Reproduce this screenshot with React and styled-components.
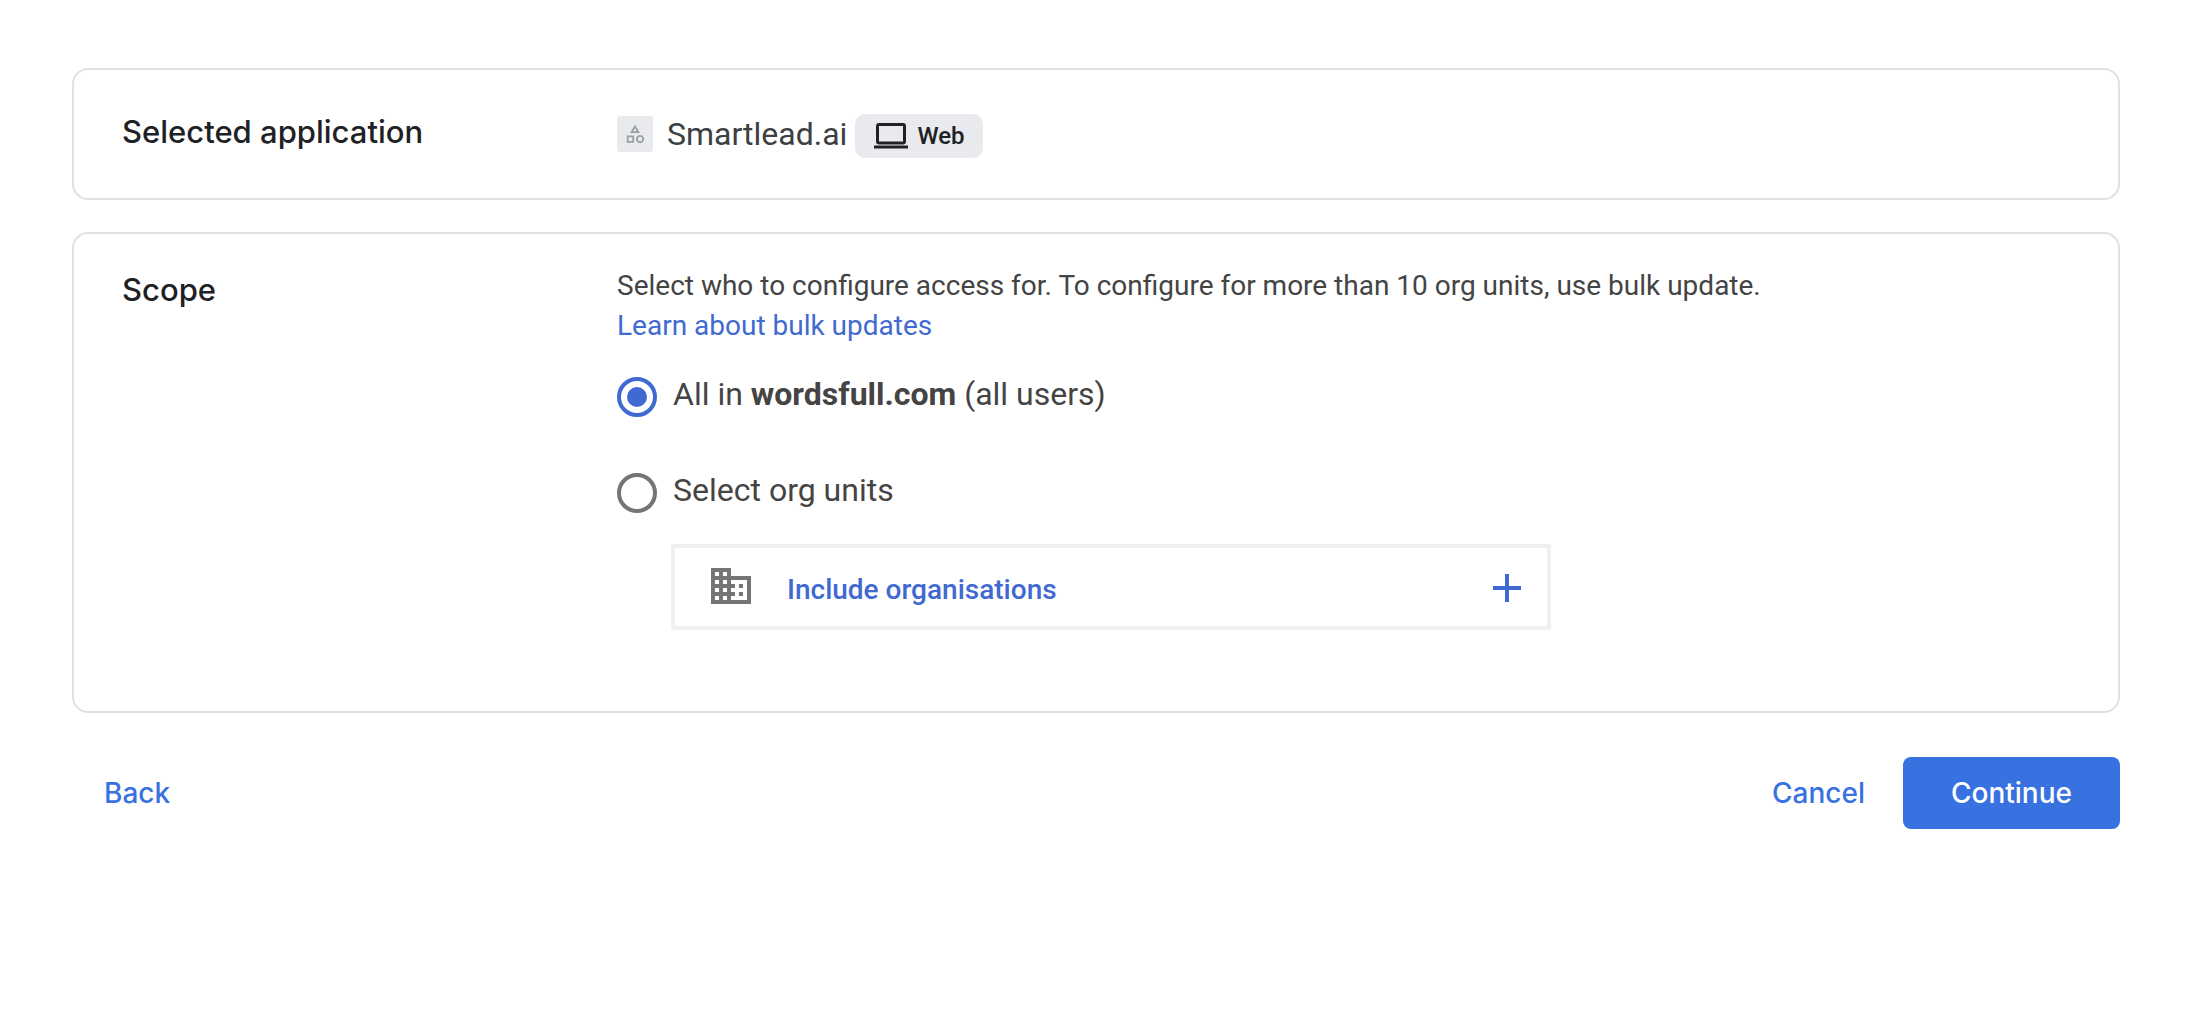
import { useState } from "react";
import styled, { createGlobalStyle } from "styled-components";
import { MdAdd, MdBusiness, MdOutlineCategory } from "react-icons/md";

const GlobalStyle = createGlobalStyle`
  *,
  *::before,
  *::after {
    box-sizing: border-box;
  }

  body {
    margin: 0;
    background: #fff;
    color: #3c4043;
    font-family: Roboto, "Liberation Sans", sans-serif;
    font-size: 28px;
    line-height: 40px;
  }

  h2,
  p {
    margin: 0;
  }

  button {
    font-family: inherit;
    cursor: pointer;
  }
`;

const Page = styled.main`
  display: flex;
  flex-direction: column;
  gap: 32px;
  padding: 68px 74px 68px 72px;
`;

const Card = styled.section`
  display: grid;
  grid-template-columns: 495px minmax(0, 1fr);
  padding: ${(props) => (props.$compact ? "42px 48px" : "32px 48px 81px")};
  border: 2px solid #e0e0e0;
  border-radius: 16px;
`;

const CardTitle = styled.h2`
  padding-top: ${(props) => (props.$compact ? "0" : "4px")};
  color: #202124;
  font-family: Inter, Roboto, sans-serif;
  font-size: 31px;
  font-weight: 500;
  line-height: 40px;
`;

const Application = styled.div`
  display: flex;
  align-items: center;
  height: 44px;
`;

const AppIcon = styled.span`
  display: grid;
  place-items: center;
  width: 36px;
  height: 36px;
  margin-right: 14px;
  border-radius: 3px;
  background: #e8eaed;
  color: #9aa0a6;
  font-size: 22px;
`;

const AppName = styled.span`
  margin-right: 8px;
  font-size: 32px;
  line-height: 44px;
`;

const Badge = styled.span`
  display: flex;
  align-items: center;
  gap: 9px;
  height: 44px;
  margin-top: 4px;
  padding: 0 18px 0 19px;
  border-radius: 10px;
  background: #e8eaed;
  color: #202124;
  font-size: 24px;
  font-weight: 500;
`;

const Description = styled.p`
  color: #444;
`;

const Link = styled.a`
  color: #4169d2;
  text-decoration: none;
`;

const Options = styled.div`
  display: flex;
  flex-direction: column;
  gap: 51px;
  margin-top: 26px;
`;

const Option = styled.label`
  display: flex;
  gap: 16px;
  color: #444;
  font-size: 32px;
  line-height: 44px;
`;

const Radio = styled.input`
  appearance: none;
  display: grid;
  place-items: center;
  flex: none;
  width: 40px;
  height: 40px;
  margin: 5px 0 0;
  border: 4px solid #757575;
  border-radius: 50%;

  &:checked {
    border-color: #4169d2;
  }

  &:checked::before {
    content: "";
    width: 20px;
    height: 20px;
    border-radius: 50%;
    background: #4169d2;
  }
`;

const IncludeButton = styled.button`
  display: flex;
  align-items: center;
  width: 100%;
  max-width: 880px;
  height: 86px;
  margin: 31px 0 0 54px;
  padding: 0 16px 0 32px;
  border: 4px solid #f0f0f0;
  background: #fff;
  color: #4169d2;
  font-size: 28px;
  font-weight: 500;

  svg {
    flex: none;
    width: 48px;
    height: 48px;
    margin-top: 2px;
  }

  svg:first-child {
    margin: 0 0 2px;
    color: #757575;
  }
`;

const IncludeLabel = styled.span`
  flex: 1;
  padding: 4px 0 0 32px;
  text-align: left;
`;

const Footer = styled.footer`
  display: flex;
  align-items: center;
  justify-content: space-between;
  padding-top: 12px;
`;

const Actions = styled.div`
  display: flex;
  gap: 6px;
`;

const Button = styled.button`
  height: 72px;
  padding: 0 ${(props) => (props.$primary ? "48px" : "32px")};
  border: 0;
  border-radius: 8px;
  background: ${(props) => (props.$primary ? "#3871e0" : "transparent")};
  color: ${(props) => (props.$primary ? "#fff" : "#3871e0")};
  font-family: Inter, Roboto, sans-serif;
  font-size: 28px;
  font-weight: 500;
`;

function LaptopIcon() {
  return (
    <svg width="34" height="26" viewBox="0 0 34 26" aria-hidden="true">
      <rect
        x="3.5"
        y="1.5"
        width="27"
        height="18.5"
        rx="1.5"
        fill="none"
        stroke="currentColor"
        strokeWidth="3"
      />
      <path d="M0 22.5h34v3H0z" fill="currentColor" />
    </svg>
  );
}

function App() {
  const [scope, setScope] = useState("all");

  return (
    <>
      <GlobalStyle />
      <Page>
        <Card $compact>
          <CardTitle $compact>Selected application</CardTitle>
          <Application>
            <AppIcon>
              <MdOutlineCategory />
            </AppIcon>
            <AppName>Smartlead.ai</AppName>
            <Badge>
              <LaptopIcon />
              Web
            </Badge>
          </Application>
        </Card>

        <Card>
          <CardTitle>Scope</CardTitle>
          <div>
            <Description>
              Select who to configure access for. To configure for more than 10
              org units, use bulk update.
              <br />
              <Link href="#bulk-updates">Learn about bulk updates</Link>
            </Description>

            <Options>
              <Option>
                <Radio
                  type="radio"
                  name="scope"
                  checked={scope === "all"}
                  onChange={() => setScope("all")}
                />
                <span>
                  All in <strong>wordsfull.com</strong> (all users)
                </span>
              </Option>
              <Option>
                <Radio
                  type="radio"
                  name="scope"
                  checked={scope === "units"}
                  onChange={() => setScope("units")}
                />
                <span>Select org units</span>
              </Option>
            </Options>

            <IncludeButton type="button" onClick={() => setScope("units")}>
              <MdBusiness />
              <IncludeLabel>Include organisations</IncludeLabel>
              <MdAdd />
            </IncludeButton>
          </div>
        </Card>

        <Footer>
          <Button type="button">Back</Button>
          <Actions>
            <Button type="button">Cancel</Button>
            <Button type="button" $primary>
              Continue
            </Button>
          </Actions>
        </Footer>
      </Page>
    </>
  );
}

export default App;
